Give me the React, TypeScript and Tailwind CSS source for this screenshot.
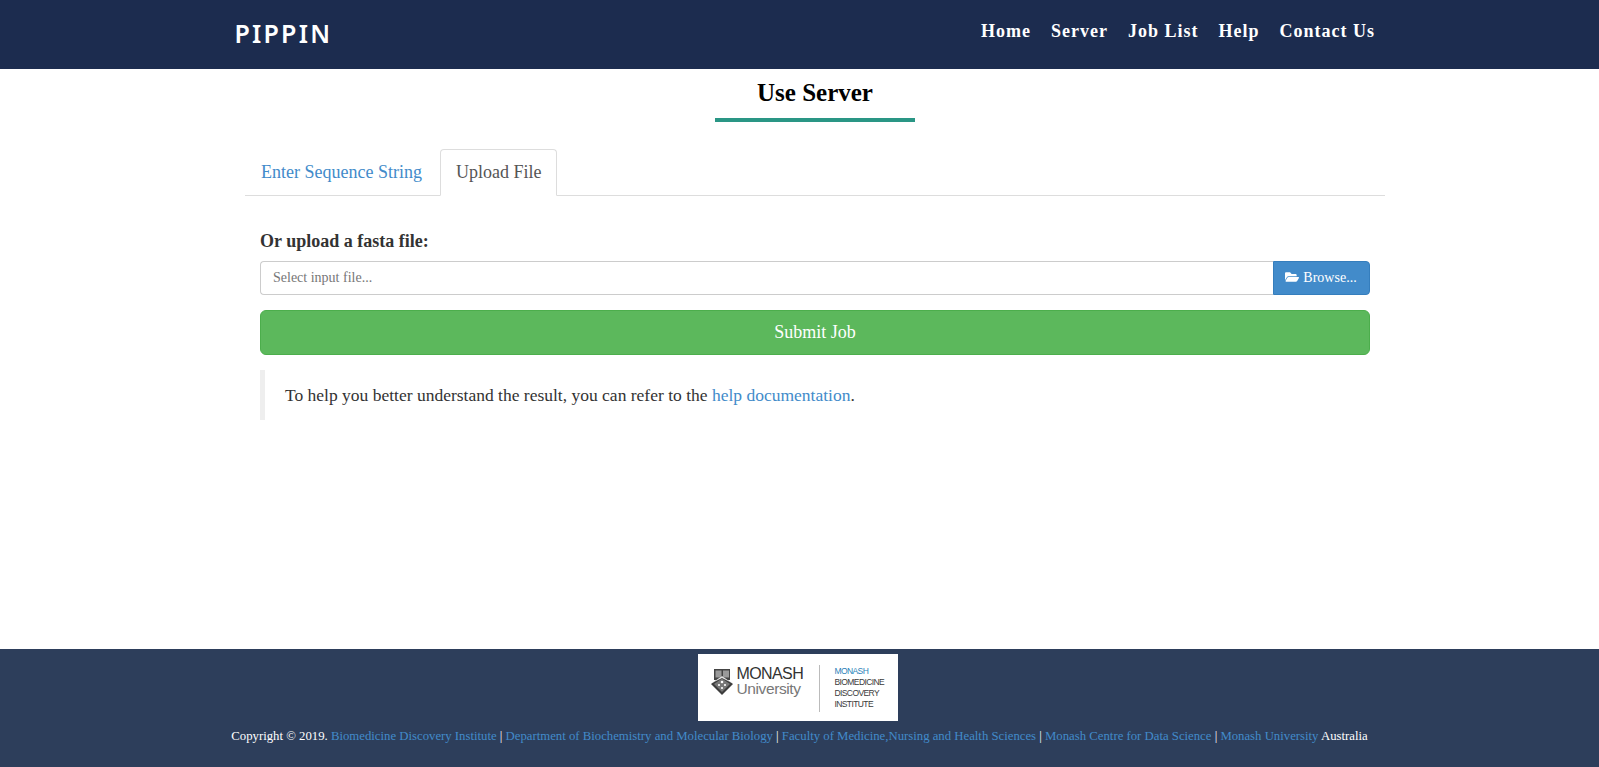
import React from 'react';
import { FaFolderOpen } from 'react-icons/fa';

const navItems = ['Home', 'Server', 'Job List', 'Help', 'Contact Us'];

const MonashLogo: React.FC = () => (
    <div className="flex h-[67px] w-[200px] items-start bg-white pl-[12px] pt-[12px] font-['Liberation_Sans',sans-serif] text-[#3a3a3a]">
        <svg width="24" height="28" viewBox="0 0 24 28" className="mt-[2px] shrink-0">
            <path d="M4 1h16v11H4z" fill="#444" />
            <rect x="5.5" y="2.5" width="6" height="7" fill="#9a9a9a" />
            <rect x="13" y="2.5" width="6" height="7" fill="#9a9a9a" />
            <path d="M12 8l11 8-11 11L1 16z" fill="#3d3d3d" />
            <path d="M12 10.5l8 5.5-8 8-8-8z" fill="#777" />
            <path d="M2 15l10-7 10 7-10-5z" fill="#e4e4e4" />
            <circle cx="12" cy="14" r="1.3" fill="#fff" />
            <circle cx="9" cy="17" r="1.1" fill="#fff" />
            <circle cx="15" cy="17" r="1.1" fill="#fff" />
            <circle cx="12" cy="20" r="1.1" fill="#fff" />
        </svg>
        <div className="ml-[3px] flex w-[70px] flex-col">
            <span className="text-[16px] leading-[16px] tracking-[-0.6px] text-[#333]">MONASH</span>
            <span className="text-[15.5px] font-light leading-[14px] tracking-[-0.4px] text-[#777]">University</span>
        </div>
        <div className="ml-[12px] mt-[-1px] h-[47px] w-px bg-[#bbb]"></div>
        <div className="ml-[15px] flex flex-col text-[8.5px] leading-[11px] tracking-[-0.6px]">
            <span className="text-[#2a7fb8]">MONASH</span>
            <span>BIOMEDICINE</span>
            <span>DISCOVERY</span>
            <span>INSTITUTE</span>
        </div>
    </div>
);

const App: React.FC = () => {
    return (
        <div className="flex min-h-[767px] flex-col bg-white font-['Liberation_Serif',serif] text-[#333]">
            {/* Header */}
            <header className="h-[69px] bg-[#1c2c4f]">
                <div className="mx-auto flex w-[1170px] items-start justify-between pl-[20px] pr-[9.5px]">
                    <a className="mt-[18px] font-['Noto_Sans',sans-serif] text-[25px] font-semibold leading-[30px] tracking-[2.2px] text-white">PIPPIN</a>
                    <nav className="mt-[21px] flex gap-[20px]">
                        {navItems.map(item => (
                            <a key={item} className="text-[18px] font-bold leading-[20px] tracking-[1px] text-white">{item}</a>
                        ))}
                    </nav>
                </div>
            </header>

            {/* Main Content */}
            <main className="ml-[245px] w-[1140px]">
                <h2 className="mt-[8px] text-center text-[25px] font-bold leading-[32px] text-black">Use Server</h2>
                <div className="mx-auto mt-[9px] h-[4px] w-[200px] bg-[#2a9685]"></div>

                <div className="mt-[27px] flex h-[47px] border-b border-[#ddd] text-[18px]">
                    <a className="px-[16px] pt-[11px] leading-[24px] text-[#428bca]">Enter Sequence String</a>
                    <a className="ml-[2px] h-[47px] rounded-t border border-b-white border-[#ddd] bg-white px-[15px] pt-[10px] leading-[24px] text-[#555]">Upload File</a>
                </div>

                <div className="px-[15px]">
                    <label className="mt-[32px] block text-[18px] font-bold leading-[26px]">Or upload a fasta file:</label>
                    <div className="mt-[7px] flex h-[34px]">
                        <div className="flex-1 rounded-l border border-r-0 border-[#ccc] px-[12px] text-[14px] leading-[32px] text-[#777]">Select input file...</div>
                        <button className="flex w-[97px] items-center justify-center gap-[4px] rounded-r border border-[#357ebd] bg-[#428bca] pb-[2px] pr-[1px] text-[14px] text-white">
                            <FaFolderOpen className="text-[14px]" />
                            Browse...
                        </button>
                    </div>
                    <button className="mt-[15px] block h-[45px] w-full rounded-md border border-[#4cae4c] bg-[#5cb85c] text-[18px] text-white">Submit Job</button>
                    <blockquote className="mt-[15px] border-l-[5px] border-[#eee] px-[20px] py-[10px] text-[17.5px] leading-[30px] text-[#333]">
                        To help you better understand the result, you can refer to the <a className="text-[#428bca]">help documentation</a>.
                    </blockquote>
                </div>
            </main>

            {/* Footer */}
            <footer className="mt-auto flex h-[118px] flex-col items-center bg-[#2d3e5b] pt-[5px]">
                <div className="-translate-x-[2px]"><MonashLogo /></div>
                <p className="mt-[6px] text-center text-[12.76px] leading-[18px] text-white">
                    Copyright © 2019. <a className="text-[#428bca]">Biomedicine Discovery Institute</a> | <a className="text-[#428bca]">Department of Biochemistry and Molecular Biology</a> | <a className="text-[#428bca]">Faculty of Medicine,Nursing and Health Sciences</a> | <a className="text-[#428bca]">Monash Centre for Data Science</a> | <a className="text-[#428bca]">Monash University</a> Australia
                </p>
            </footer>
        </div>
    );
};

export default App;
